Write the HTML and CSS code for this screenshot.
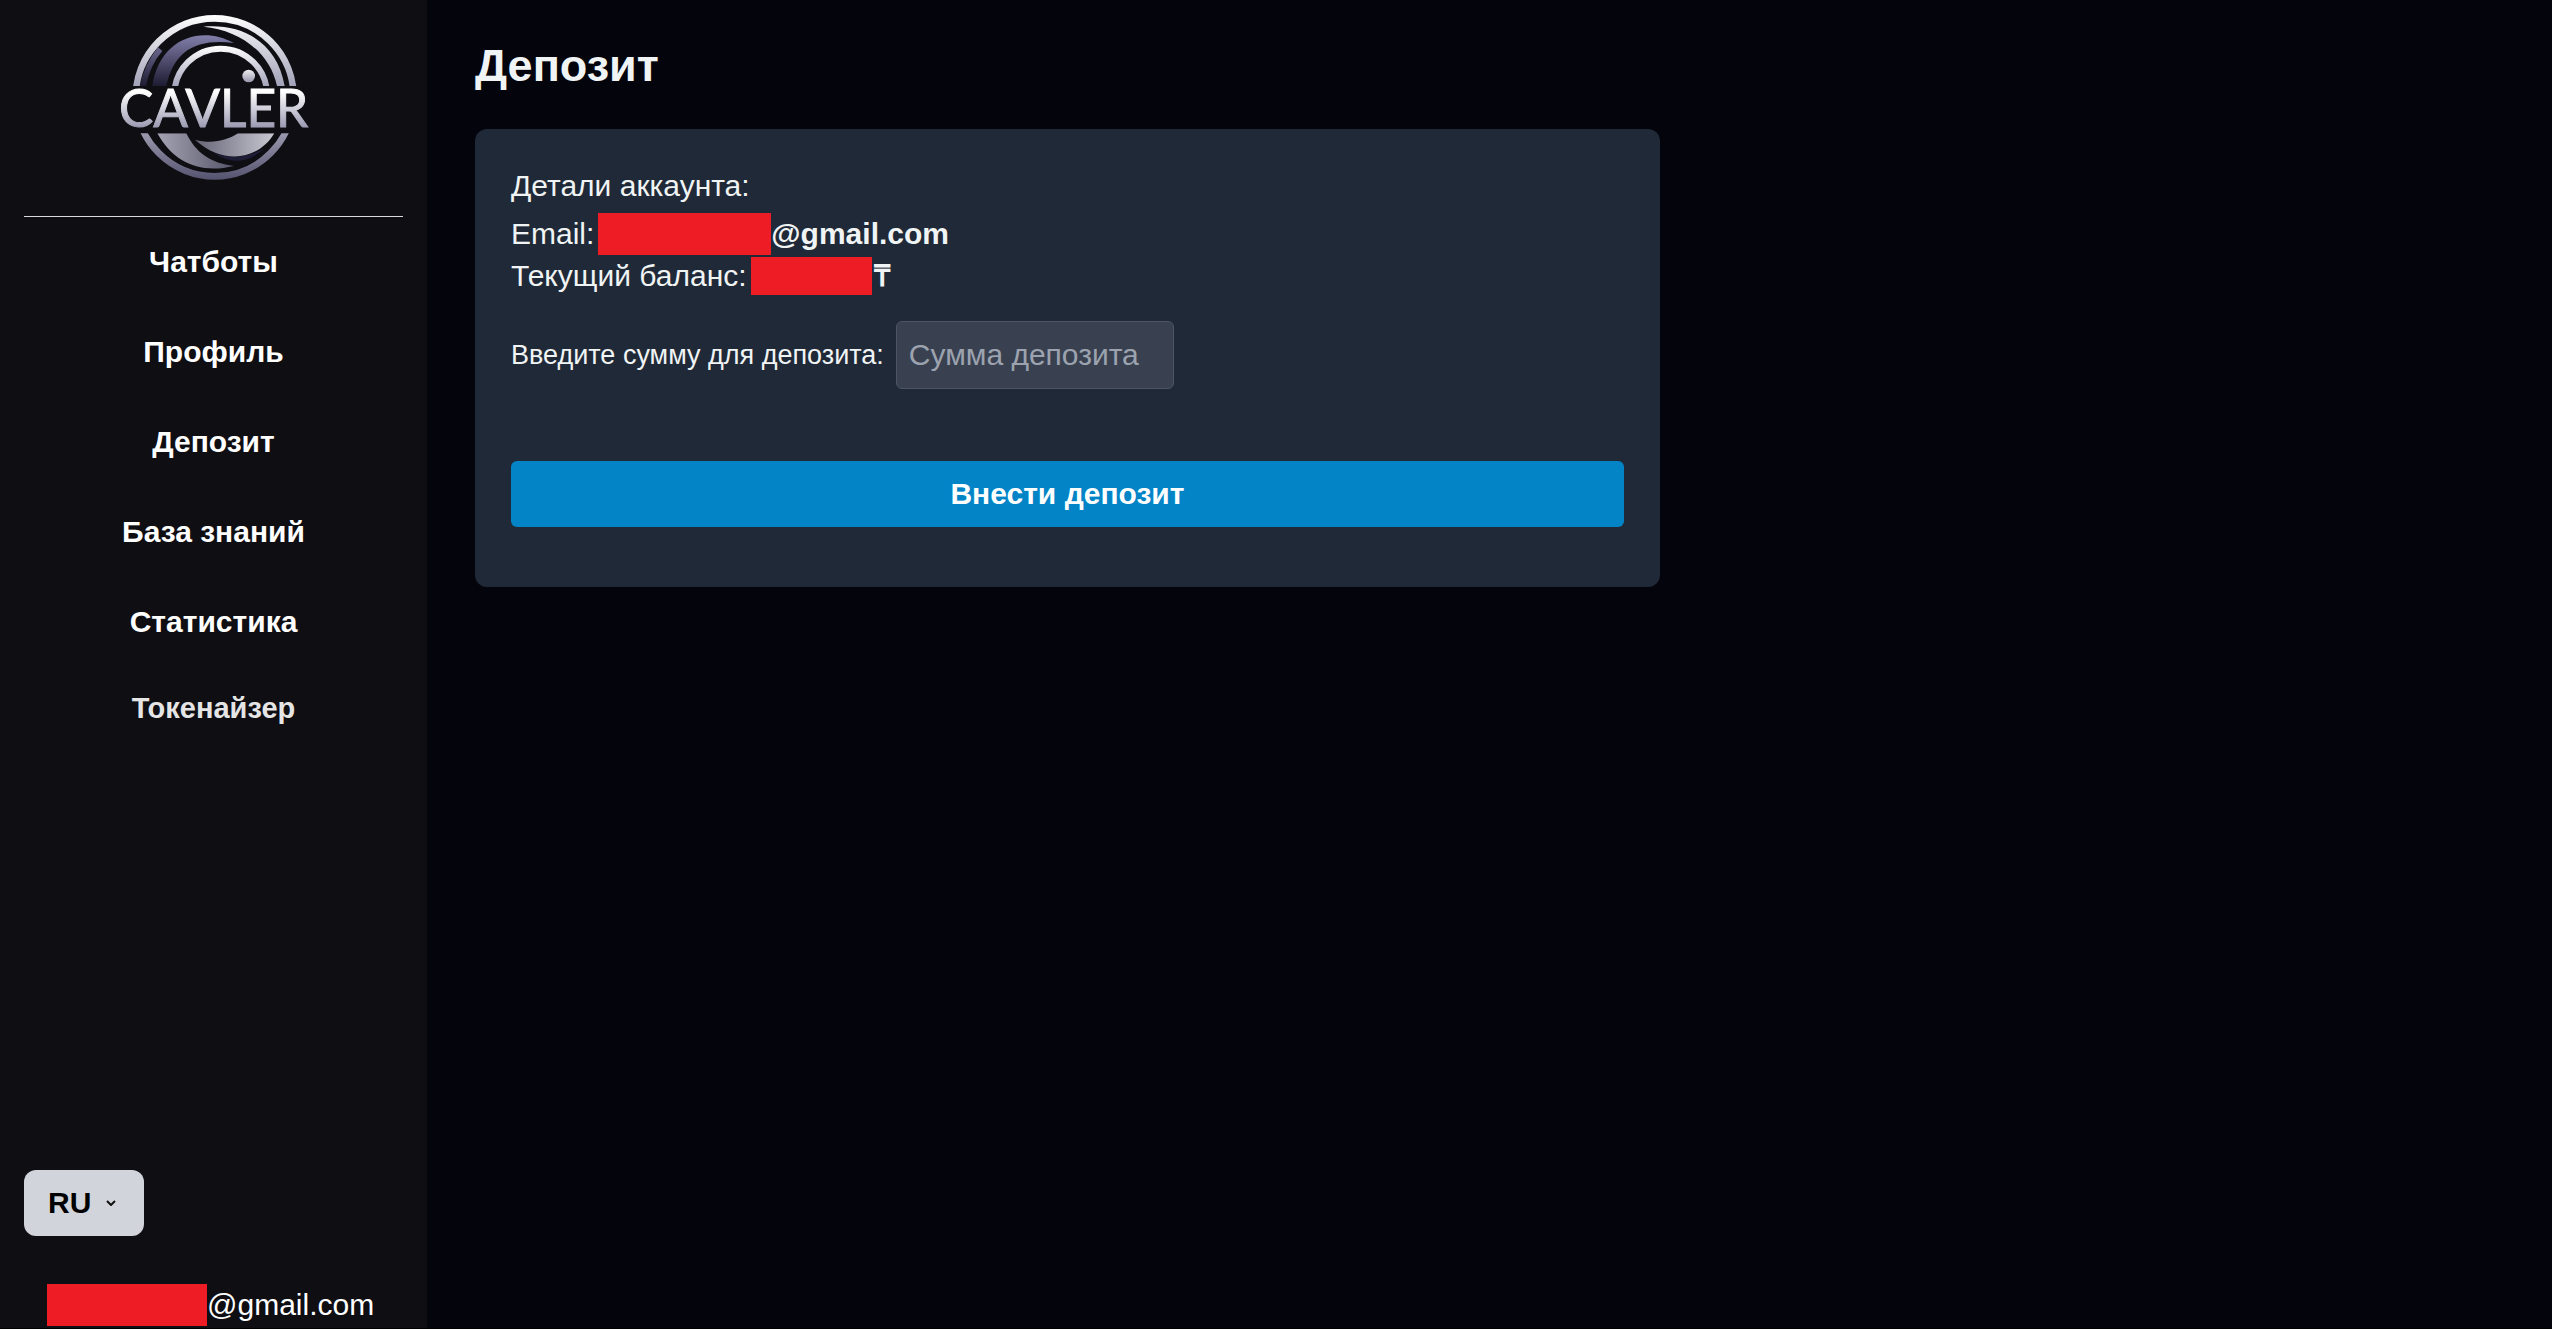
FILE: index.html
```html
<!DOCTYPE html>
<html lang="ru">
<head>
<meta charset="utf-8">
<meta name="viewport" content="width=device-width, initial-scale=1">
<title>Депозит</title>
<link rel="stylesheet" href="styles.css">
</head>
<body>
<div class="layout">
  <aside class="sidebar">
    <a class="brand" href="#">
      <svg class="logo" viewBox="40 0 600 600" role="img" aria-label="CAVLER">
        <defs>
          <linearGradient id="silver" gradientUnits="userSpaceOnUse" x1="0" y1="45" x2="0" y2="258"><stop offset="0" stop-color="#fff"/><stop offset="1" stop-color="#a2a2b8"/></linearGradient>
          <linearGradient id="arc" gradientUnits="userSpaceOnUse" x1="0" y1="137" x2="0" y2="258"><stop offset="0" stop-color="#fff"/><stop offset="1" stop-color="#a5a5bc"/></linearGradient>
          <linearGradient id="violet" gradientUnits="userSpaceOnUse" x1="0" y1="105" x2="0" y2="258"><stop offset="0" stop-color="#8280aa"/><stop offset="1" stop-color="#1e1b33"/></linearGradient>
          <linearGradient id="base" gradientUnits="userSpaceOnUse" x1="0" y1="400" x2="0" y2="540"><stop offset="0" stop-color="#9a99ad"/><stop offset="1" stop-color="#55526f"/></linearGradient>
          <linearGradient id="word" gradientUnits="userSpaceOnUse" x1="0" y1="275" x2="0" y2="382"><stop offset="0" stop-color="#fff"/><stop offset="1" stop-color="#9b9ab2"/></linearGradient>
          <linearGradient id="waveLeft" x1="0" x2="1"><stop offset="0" stop-color="#a5a4b3"/><stop offset="1" stop-color="#565468"/></linearGradient>
          <linearGradient id="waveRight" x1="0" x2="1"><stop offset="0" stop-color="#666476"/><stop offset="1" stop-color="#c8c8d2"/></linearGradient>
          <linearGradient id="dot" x1="0" y1="0" x2="0" y2="1"><stop offset="0" stop-color="#eee"/><stop offset="1" stop-color="#9795ad"/></linearGradient>
          <clipPath id="top"><path d="M0 0H690V258H0z"/></clipPath>
          <clipPath id="bottom"><path d="M0 400H690V690H0z"/></clipPath>
        </defs>
        <g clip-path="url(#top)">
          <circle cx="342" cy="292" r="237" fill="none" stroke="url(#silver)" stroke-width="20"/>
          <circle cx="360" cy="285" r="139" fill="none" stroke="url(#arc)" stroke-width="18"/>
          <path d="M308 80C430 70 530 130 552 258H529C507 155 415 90 308 80z" fill="url(#silver)"/>
          <path d="M155 258C176 116 300 74 400 129C290 115 220 150 197 258z" fill="url(#violet)"/>
          <path d="M118 258Q130 195 172 142L185 153Q148 196 136 258z" fill="url(#violet)"/>
          <circle cx="444" cy="228" r="19" fill="url(#dot)"/>
        </g>
        <text class="wordmark" x="339" y="381">CAVLER</text>
        <g clip-path="url(#bottom)">
          <circle cx="342" cy="292" r="237" fill="none" stroke="url(#base)" stroke-width="20"/>
          <path d="M170 400H257C285 458 330 490 400 498C300 522 220 490 170 400z" fill="url(#waveLeft)"/>
          <path d="M338 458Q412 488 492 445Q418 512 338 458z" fill="#1e1d38"/>
          <path d="M283 419C335 433 380 421 412 400H521C475 478 370 498 283 419z" fill="url(#waveRight)"/>
        </g>
      </svg>
    </a>
    <nav class="menu">
      <a class="menu-link" href="#">Чатботы</a>
      <a class="menu-link" href="#">Профиль</a>
      <a class="menu-link" href="#">Депозит</a>
      <a class="menu-link" href="#">База знаний</a>
      <a class="menu-link" href="#">Статистика</a>
      <a class="menu-link menu-link-muted" href="#">Токенайзер</a>
    </nav>
    <div class="sidebar-footer">
      <div class="language">
        <select class="language-select" aria-label="Язык"><option>RU</option></select>
        <svg class="chevron" viewBox="0 0 10 6" aria-hidden="true"><path d="M1 1L5 5L9 1" fill="none" stroke="#111" stroke-width="2"/></svg>
      </div>
      <div class="user"><span class="redacted redacted-user"></span>@gmail.com</div>
    </div>
  </aside>
  <main class="content">
    <h1 class="title">Депозит</h1>
    <section class="card">
      <p class="details-heading">Детали аккаунта:</p>
      <p class="detail">Email:<strong class="value"><span class="redacted redacted-email"></span>@gmail.com</strong></p>
      <p class="detail">Текущий баланс:<strong class="value"><span class="redacted redacted-balance"></span>₸</strong></p>
      <form class="deposit">
        <div class="field">
          <label class="field-label" for="amount">Введите сумму для депозита:</label>
          <input class="field-input" id="amount" type="text" inputmode="numeric" placeholder="Сумма депозита">
        </div>
        <button class="submit" type="button">Внести депозит</button>
      </form>
    </section>
  </main>
</div>
</body>
</html>
```
FILE: styles.css
```css
* {
  box-sizing: border-box;
}

body {
  margin: 0;
  background: #04040d;
  color: #f0f4f4;
  font: 30px/42px "Liberation Sans", Arial, sans-serif;
}

.layout {
  display: flex;
  min-height: 100vh;
  border-bottom: 1px solid #000;
}

.sidebar {
  flex: 0 0 427px;
  display: flex;
  flex-direction: column;
  padding: 0 24px 2px;
  background: #0f0e13;
  color: #fff;
}

.brand {
  display: flex;
  justify-content: center;
  padding-bottom: 16px;
  border-bottom: 1px solid #d9d9df;
}

.logo {
  width: 200px;
  height: 200px;
}

.wordmark {
  font-family: Lato, sans-serif;
  font-size: 154px;
  text-anchor: middle;
  fill: url(#word);
  stroke: url(#word);
  stroke-width: 3px;
}

.menu {
  display: flex;
  flex-direction: column;
  gap: 24px;
  padding-top: 12px;
}

.menu-link {
  padding: 12px;
  color: #fff;
  font-weight: 700;
  text-align: center;
  text-decoration: none;
}

.menu-link-muted {
  padding: 8px;
  color: #e5e5e5;
  font-size: 29px;
}

.sidebar-footer {
  display: flex;
  flex-direction: column;
  align-items: flex-start;
  gap: 48px;
  margin-top: auto;
}

.language {
  display: grid;
  align-items: center;
  width: 120px;
}

.language-select {
  grid-area: 1 / 1;
  appearance: none;
  height: 66px;
  padding: 0 24px;
  border: 0;
  border-radius: 12px;
  background: #d1d5db;
  color: #000;
  font: inherit;
  font-weight: 700;
}

.chevron {
  grid-area: 1 / 1;
  justify-self: end;
  width: 10px;
  height: 6px;
  margin-right: 28px;
  pointer-events: none;
}

.user,
.value {
  display: inline-flex;
  align-items: center;
  vertical-align: top;
}

.user {
  padding-left: 23px;
}

.value {
  margin-left: 4px;
}

.redacted {
  height: 42px;
  background: #ee1c25;
}

.redacted-user {
  width: 160px;
}

.redacted-email {
  width: 173px;
}

.redacted-balance {
  width: 121px;
  height: 38px;
  margin-right: 2px;
}

.content {
  flex: 1;
  min-width: 0;
  padding: 39px 48px;
}

.title {
  margin: 0 0 36px;
  font-size: 45px;
  line-height: 54px;
}

.card {
  width: 58.4%;
  padding: 36px 36px 60px;
  border-radius: 12px;
  background: #202937;
}

.details-heading {
  margin: 0 0 6px;
}

.detail {
  margin: 0;
}

.deposit {
  display: flex;
  flex-direction: column;
  gap: 72px;
  margin-top: 24px;
}

.field {
  display: flex;
  align-items: center;
  gap: 12px;
}

.field-label {
  font-size: 27px;
}

.field-input {
  width: 278px;
  height: 68px;
  padding: 0 12px;
  border: 1px solid #4b5563;
  border-radius: 6px;
  background: #394151;
  color: #f0f4f4;
  font: inherit;
}

.field-input::placeholder {
  color: #9ca3af;
  opacity: 1;
}

.submit {
  height: 66px;
  border: 0;
  border-radius: 6px;
  background: #0284c7;
  color: #fff;
  font: inherit;
  font-weight: 700;
}
```
